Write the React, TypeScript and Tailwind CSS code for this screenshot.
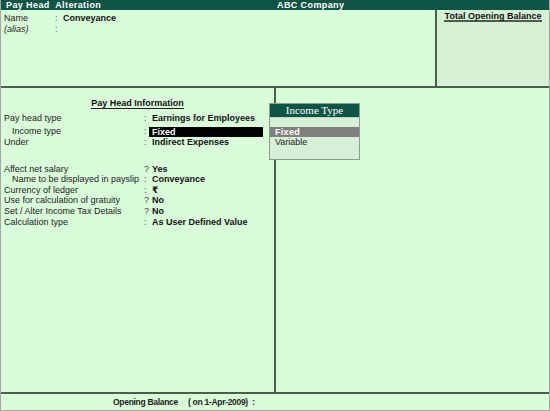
import React from 'react';

const sans = "font-['Liberation_Sans','DejaVu_Sans',Arial,sans-serif]";

type Row = { label: string; sep: string; value: string; indent?: boolean; hi?: boolean; cls: string };

const rows: Row[] = [
  { label: 'Pay head type', sep: ':', value: 'Earnings for Employees', cls: 'mt-[4px] h-[11px]' },
  { label: 'Income type', sep: ':', value: 'Fixed', indent: true, hi: true, cls: 'mt-[2px] h-[11px]' },
  { label: 'Under', sep: ':', value: 'Indirect Expenses', cls: 'h-[11px]' },
  { label: 'Affect net salary', sep: '?', value: 'Yes', cls: 'mt-[16px] h-[10.6px]' },
  { label: 'Name to be displayed in payslip', sep: ':', value: 'Conveyance', indent: true, cls: 'h-[10.6px]' },
  { label: 'Currency of ledger', sep: ':', value: '₹', cls: 'h-[10.6px]' },
  { label: 'Use for calculation of gratuity', sep: '?', value: 'No', cls: 'h-[10.6px]' },
  { label: 'Set / Alter Income Tax Details', sep: '?', value: 'No', cls: 'h-[10.6px]' },
  { label: 'Calculation type', sep: ':', value: 'As User Defined Value', cls: 'h-[10.6px]' },
];

export default function App() {
  return (
    <div className={`${sans} relative w-[550px] h-[411px] flex flex-col bg-[#d9fdd9] border-x border-b border-[#a3a8a3] text-[9px] text-[#111] overflow-hidden`}>
      {/* title bar */}
      <div className="h-[10px] bg-[#0e5545] flex items-center text-white font-bold leading-[10px] tracking-[0.4px]">
        <div className="w-[276px] pl-[5px]">Pay Head&nbsp; Alteration</div>
        <div className="flex-1">ABC Company</div>
      </div>

      {/* top section */}
      <div className="h-[76px] flex">
        <div className="flex-1 pt-[3px]">
          <div className="flex h-[11px] leading-[11px]">
            <span className="w-[54px] pl-[3px] text-[#222]">Name</span>
            <span className="w-[8px] text-[#555]">:</span>
            <span className="font-bold">Conveyance</span>
          </div>
          <div className="flex h-[11px] leading-[11px]">
            <span className="w-[54px] pl-[3px] italic text-[#222]">(alias)</span>
            <span className="w-[8px] text-[#555]">:</span>
          </div>
        </div>
        <div className="w-[114px] bg-[#d7f1d7] border-l-2 border-[#4d5d4d] flex justify-center pt-[1px]">
          <div className="h-[11px] leading-[10px] font-bold border-b-2 border-[#4d5d4d] px-[1px]">Total Opening Balance</div>
        </div>
      </div>
      <div className="h-[2px] bg-[#4d5d4d]" />

      {/* middle section */}
      <div className="flex-1 flex">
        <div className="w-[275px] border-r-2 border-[#4d5d4d] pt-[10px]">
          <div className="flex justify-center h-[11px] leading-[11px]">
            <span className="font-bold border-b border-[#222] leading-[10px]">Pay Head Information</span>
          </div>
          {rows.map((r) => (
            <div key={r.label} className={`flex items-center ${r.cls}`}>
              <span className={`w-[141px] ${r.indent ? 'pl-[11px]' : 'pl-[3px]'} text-[#222]`}>{r.label}</span>
              <span className="w-[10px] pl-[2px] text-[#444]">{r.sep}</span>
              {r.hi ? (
                <span className="-ml-[3px] pl-[3px] w-[114px] h-[10px] leading-[10px] bg-black text-white font-bold">{r.value}</span>
              ) : (
                <span className="font-bold">{r.value}</span>
              )}
            </div>
          ))}
        </div>
        <div className="flex-1" />
      </div>
      <div className="h-[2px] bg-[#4d5d4d]" />

      {/* bottom strip */}
      <div className="h-[16px] flex items-center font-bold text-[#222] text-[8.5px] tracking-[-0.3px]">
        <span className="ml-[112px] w-[75px]">Opening Balance</span>
        <span>( on 1-Apr-2009)&nbsp; :</span>
      </div>

      {/* Income Type popup */}
      <div className="absolute left-[268px] top-[103px] w-[91px] h-[57px] border border-[#8e9a8e] bg-[#d7efd7] flex flex-col">
        <div className="h-[13px] bg-[#0e5545] text-white text-center leading-[13px] text-[11px] font-['Liberation_Serif','Times_New_Roman',serif]">
          Income Type
        </div>
        <div className="h-[10px] border-t border-[#c2d4c2]" />
        <div className="h-[10px] bg-[#808080] text-white font-bold pl-[5px] leading-[10px] tracking-[0.3px]">Fixed</div>
        <div className="h-[11px] pl-[5px] leading-[11px] text-[#222]">Variable</div>
      </div>
    </div>
  );
}
